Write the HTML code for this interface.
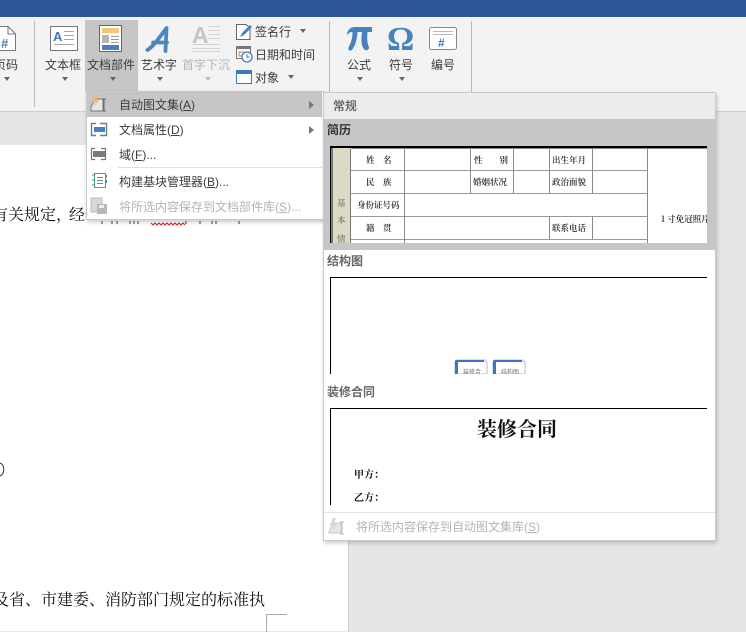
<!DOCTYPE html>
<html lang="zh-CN"><head><meta charset="utf-8"><title>文档部件</title>
<style>
html,body{margin:0;padding:0}
body{width:746px;height:631px;overflow:hidden;position:relative;background:#e6e6e6;font-family:"Liberation Sans","Noto Sans CJK SC",sans-serif;font-size:12px;color:#3c3c3c}
div,span,svg{position:absolute}
.t{white-space:nowrap;line-height:16px;height:16px}
.c{text-align:center}
.d{color:#b4b4b4}
u{text-underline-offset:1px}
.doc{font-family:"Noto Serif CJK SC",serif;font-size:16px;color:#111;white-space:nowrap;line-height:20px}
.h{font-weight:700;color:#666;white-space:nowrap;line-height:16px}
.ar{width:0;height:0;border-left:3.5px solid transparent;border-right:3.5px solid transparent;border-top:4px solid #666}
.ma{width:0;height:0;border-top:4px solid transparent;border-bottom:4px solid transparent;border-left:5px solid #777}
</style></head><body>
<div style="left:0;top:0;width:746px;height:17px;background:#2b579a"></div>
<div style="left:0;top:17px;width:746px;height:94px;background:#f3f3f3;border-bottom:1px solid #cfcfcf"></div>
<div style="left:0;top:145px;width:348px;height:486px;background:#fff"></div>
<div style="left:348px;top:112px;width:1px;height:519px;background:#cdcdcd"></div>
<div style="left:34px;top:21px;width:1px;height:86px;background:#b9b9b9"></div>
<div style="left:329px;top:21px;width:1px;height:72px;background:#b9b9b9"></div>
<div style="left:471px;top:21px;width:1px;height:72px;background:#b9b9b9"></div>
<div style="left:85px;top:20px;width:53px;height:72px;background:#c6c6c6"></div>

<!-- Ribbon icons -->
<svg style="left:0;top:0" width="480" height="90" viewBox="0 0 480 90">
<path d="M-2 26.5H8L15.500 34V50.500H-2Z" fill="#fff" stroke="#777"/><path d="M8 26.500V34H15.500" fill="none" stroke="#777"/>
<text x="1" y="48" font-family="Liberation Sans" font-weight="700" font-size="13" fill="#3f7ab8">#</text>
<rect x="50.500" y="26.500" width="27" height="24" fill="#fff" stroke="#777"/>
<text x="53" y="41" font-family="Liberation Sans" font-weight="700" font-size="13" fill="#3f7ab8">A</text>
<path d="M64 31.500h10M64 35.500h10M64 39.500h10M54 44.500h20" stroke="#a8a8a8"/>
<rect x="99.500" y="25.500" width="22" height="26" fill="#fff" stroke="#666"/>
<rect x="102" y="28" width="17" height="5" fill="#f2c677"/><rect x="102" y="35" width="7" height="8" fill="#b5b5b5"/>
<path d="M111 36.500h8M111 39.500h8M111 42.500h8" stroke="#999"/><rect x="102" y="45" width="17" height="5" fill="#4a80b8"/>
<path d="M147.500 50C155 45 161 35 166.500 28L165.500 51M153 42.500H167" fill="none" stroke="#4d86bd" stroke-width="3.800" stroke-linecap="round" stroke-linejoin="round"/>
<text x="192" y="43" font-family="Liberation Sans" font-weight="700" font-size="23" fill="#c6c6c6">A</text>
<path d="M208 26.500h12M208 30.500h12M208 34.500h12M208 38.500h12M192 44.500h28M192 48.500h28M192 51.500h28" stroke="#d2d2d2"/>
<path d="M236.500 24.500H246L250 28V39.500H236.500Z" fill="#fff" stroke="#666"/><path d="M240 37L242 33L250 25L252 27L244 35Z" fill="#4682bd"/>
<rect x="236.500" y="46.500" width="14" height="12" fill="#fff" stroke="#777"/><rect x="237" y="46" width="14" height="3" fill="#777"/>
<rect x="239" y="52" width="4" height="4" fill="none" stroke="#d9773a"/>
<circle cx="247" cy="57" r="5" fill="#fff" stroke="#3f7ab8" stroke-width="1.300"/><path d="M247 54v3h2.500" fill="none" stroke="#3f7ab8"/>
<rect x="236.500" y="70.500" width="15" height="13" fill="#fff" stroke="#3f78b3"/><rect x="236" y="70" width="16" height="4" fill="#3f78b3"/>
<path d="M347 34C348 29 351 27 355 27H372V32H367.500C367 38 367 43 369 47C369.500 49 367 51 365 50C361 47 361 39 362 32H357.500C357 40 355 46 352 50C350 51.500 347.500 50 348.500 47.500C351 43 352.500 38 352.500 32C350 32 348.500 33 347.500 35Z" fill="#4682bd"/>
<text x="387" y="50" font-family="Liberation Serif" font-weight="700" font-size="34" fill="#4682bd">Ω</text>
<rect x="429.500" y="27.500" width="27" height="22" rx="2" fill="#fff" stroke="#888"/>
<path d="M433 31.500h20M433 34.500h20" stroke="#bbb"/>
<text x="438" y="47" font-family="Liberation Sans" font-weight="700" font-size="12" fill="#3f7ab8">#</text>
</svg>

<!-- Ribbon text -->
<div class="t" style="left:-6px;top:57px">页码</div>
<div class="t" style="left:45px;top:57px">文本框</div>
<div class="t" style="left:87px;top:57px">文档部件</div>
<div class="t" style="left:141px;top:57px">艺术字</div>
<div class="t d" style="left:182px;top:57px">首字下沉</div>
<div class="t" style="left:255px;top:24px">签名行</div>
<div class="t" style="left:255px;top:47px">日期和时间</div>
<div class="t" style="left:255px;top:70px">对象</div>
<div class="t" style="left:347px;top:57px">公式</div>
<div class="t" style="left:389px;top:57px">符号</div>
<div class="t" style="left:431px;top:57px">编号</div>
<div class="ar" style="left:4px;top:77px"></div>
<div class="ar" style="left:62px;top:77px"></div>
<div class="ar" style="left:110px;top:77px"></div>
<div class="ar" style="left:157px;top:77px"></div>
<div class="ar" style="left:205px;top:77px;border-top-color:#bdbdbd"></div>
<div class="ar" style="left:300px;top:29px"></div>
<div class="ar" style="left:288px;top:75px"></div>
<div class="ar" style="left:357px;top:77px"></div>
<div class="ar" style="left:399px;top:77px"></div>

<!-- Document text -->
<div class="doc" style="left:-8px;top:204px">有</div>
<div class="doc" style="left:8px;top:204px">关规定</div>
<div class="doc" style="left:56px;top:204px">，</div>
<div class="doc" style="left:69px;top:204px">经</div>
<svg style="left:90px;top:218px" width="170" height="10" viewBox="0 0 170 10">
<path d="M61 5l2 2 2-2 2 2 2-2 2 2 2-2 2 2 2-2 2 2 2-2 2 2 2-2 2 2 2-2 2 2 2-2 2 2" fill="none" stroke="#e21c1c"/>
<path d="M12 3v3M22 3v3M27 3v3M40 3v3M44 3v3M48 3v3M96 3v3M110 3v3M122 3v3M126 3v3M149 3v3" stroke="#444"/>
</svg>
<svg style="left:0;top:460px" width="8" height="20" viewBox="0 0 8 20"><path d="M0 3C5 5 5 14 0 16" fill="none" stroke="#333"/></svg>
<div class="doc" style="left:-7px;top:589px;letter-spacing:0">及省、市建委、消防部门规定的标准执</div>
<div style="left:266px;top:614px;width:20px;height:17px;border-top:1px solid #aaa;border-left:1px solid #aaa"></div>

<!-- Menu -->
<div style="left:86px;top:91px;width:238px;height:129px;background:#fff;border:1px solid #c8c8c8;box-shadow:1px 2px 4px rgba(0,0,0,.22);box-sizing:border-box"></div>
<div style="left:87px;top:92px;width:235px;height:25px;background:#c6c6c6"></div>
<div style="left:118px;top:167px;width:204px;height:1px;background:#e1e1e1"></div>
<svg style="left:87px;top:92px" width="32" height="130" viewBox="0 0 32 130">
<path d="M4 15L8 7H16V19H4Z" fill="#e6e6e6" stroke="#777"/><path d="M17 7v12M15 7h4M15 19h4" stroke="#666" fill="none"/><path d="M8 3L5 10H9L6 16L12 8H9L11 3Z" fill="#edbb6a"/>
<path d="M9 31.500H4.500V43.500H9M13 31.500H19.500V43.500H13" fill="none" stroke="#6f7d8a" stroke-width="1.400"/><rect x="7" y="35" width="11" height="5" fill="#4682bd"/>
<path d="M8 56.500H4.500V67.500H8M14 56.500H18.500V67.500H14" fill="none" stroke="#777" stroke-width="1.200"/><rect x="6" y="59" width="12" height="6" fill="#7a7a7a"/>
<rect x="7.500" y="81.500" width="11" height="14" fill="#fff" stroke="#4f9a80"/><path d="M10 85.500h6M10 88.500h6M10 91.500h6" stroke="#4f9a80"/><path d="M5 83h3M5 88h3M5 93h3" stroke="#4f9a80"/><path d="M19 83v3" stroke="#d9773a" stroke-width="2"/><path d="M19 88v3" stroke="#4682bd" stroke-width="2"/>
<rect x="4" y="106" width="11" height="14" fill="#d8d8d8" stroke="#bdbdbd"/><rect x="10" y="112" width="10" height="10" fill="#b8b8b8"/><rect x="12" y="113" width="5" height="3" fill="#eee"/>
</svg>
<div class="t" style="left:119px;top:97px">自动图文集(<u>A</u>)</div>
<div class="t" style="left:119px;top:122px">文档属性(<u>D</u>)</div>
<div class="t" style="left:119px;top:147px">域(<u>F</u>)...</div>
<div class="t" style="left:119px;top:174px">构建基块管理器(<u>B</u>)...</div>
<div class="t d" style="left:119px;top:199px">将所选内容保存到文档部件库(<u>S</u>)...</div>
<div class="ma" style="left:309px;top:101px"></div>
<div class="ma" style="left:309px;top:126px"></div>

<!-- Flyout -->
<div style="left:323px;top:92px;width:393px;height:449px;background:#fff;border:1px solid #c8c8c8;box-sizing:border-box;box-shadow:1px 2px 4px rgba(0,0,0,.2)"></div>
<div style="left:324px;top:93px;width:391px;height:26px;background:#ececec"></div>
<div class="h" style="left:333px;top:98px;font-weight:400;color:#555;-webkit-text-stroke:.2px #555">常规</div>
<div style="left:324px;top:119px;width:391px;height:131px;background:#c6c6c6"></div>
<div class="h" style="left:327px;top:122px;color:#333">简历</div>
<div class="h" style="left:327px;top:253px">结构图</div>
<div class="h" style="left:327px;top:384px">装修合同</div>

<svg style="left:330px;top:146px" width="377" height="97" viewBox="0 0 377 97" font-family="Noto Serif CJK SC,serif" font-size="8.500" font-weight="600" fill="#222">
<rect width="377" height="97" fill="#fff"/>
<rect width="377" height="2" fill="#000"/><rect width="1.500" height="97" fill="#000"/>
<rect x="1.500" y="2" width="376" height="1" fill="#888"/>
<rect x="2" y="2" width="19" height="95" fill="#ddd9c3"/>
<path d="M2.500 2V97M20.500 3V97" stroke="#777"/>
<path d="M21 24.500H317M21 47.500H317M21 70.500H317M21 93.500H317" stroke="#999"/>
<path d="M74.500 3V97M140.500 3V47M183.500 3V47M219.500 3V47M219.500 70V93M262.500 3V47M262.500 70V93M317.500 3V97" stroke="#8a8a8a"/>
<text x="36" y="17">姓　名</text><text x="144" y="17">性　　别</text><text x="222" y="17">出生年月</text>
<text x="36" y="39">民　族</text><text x="143" y="39">婚姻状况</text><text x="222" y="39">政治面貌</text>
<text x="27" y="62">身份证号码</text>
<text x="36" y="85">籍　贯</text><text x="222" y="85">联系电话</text>
<text x="7" y="60" fill="#777">基</text><text x="7" y="77" fill="#777">本</text><text x="7" y="96" fill="#777">情</text>
<text x="331" y="76">1 寸免冠照片</text>
</svg>

<svg style="left:330px;top:277px" width="377" height="97" viewBox="0 0 377 97">
<rect width="377" height="97" fill="#fff"/>
<path d="M.5 97V.5H377" fill="none" stroke="#000"/>
<path d="M125 97V85Q125 83 127 83H155L157 85V97Z" fill="#fff" stroke="#aebfe6"/>
<path d="M125 97V85Q125 83 127 83H154V85H128V97Z" fill="#4472c4"/>
<path d="M163 97V85Q163 83 165 83H193L195 85V97Z" fill="#fff" stroke="#aebfe6"/>
<path d="M163 97V85Q163 83 165 83H192V85H166V97Z" fill="#4472c4"/>
<text x="133" y="97" font-family="Noto Sans CJK SC,sans-serif" font-size="6" fill="#777">装修合</text>
<text x="171" y="97" font-family="Noto Sans CJK SC,sans-serif" font-size="6" fill="#777">结构图</text>
</svg>

<svg style="left:330px;top:408px" width="377" height="97" viewBox="0 0 377 97" font-family="Noto Serif CJK SC,serif" fill="#111">
<rect width="377" height="97" fill="#fff"/>
<path d="M.5 97V.5H377" fill="none" stroke="#000"/>
<text x="147" y="28" font-size="20" font-weight="700">装修合同</text>
<text x="24" y="70" font-size="10" font-weight="700">甲方：</text>
<text x="24" y="93" font-size="10" font-weight="700">乙方：</text>
</svg>

<div style="left:324px;top:512px;width:391px;height:1px;background:#e2e2e2"></div>
<svg style="left:326px;top:516px" width="22" height="20" viewBox="0 0 22 20">
<path d="M3 16L7 7H15V17H3Z" fill="#e6e6e6" stroke="#c8c8c8"/><path d="M16 6v12M14 6h4M14 18h4" stroke="#bbb" fill="none"/><path d="M7 2L4 9H8L6 14L12 7H8L10 2Z" fill="#d6d6d6"/>
</svg>
<div class="t d" style="left:356px;top:519px">将所选内容保存到自动图文集库(<u>S</u>)</div>
</body></html>
